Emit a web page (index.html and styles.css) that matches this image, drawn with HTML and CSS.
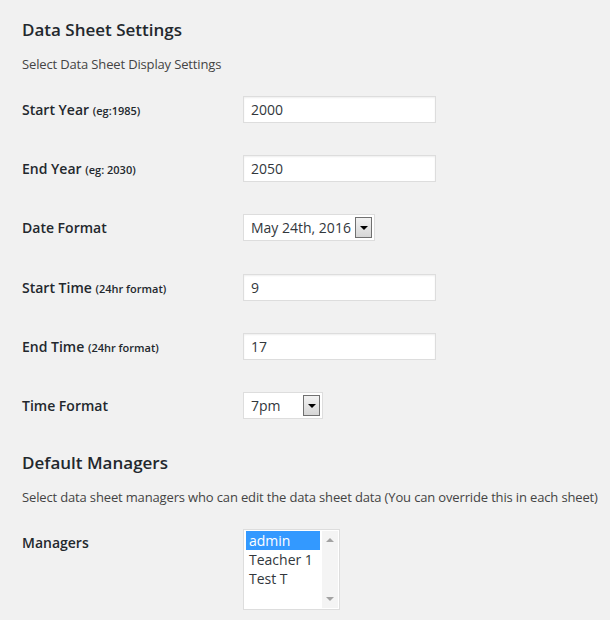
FILE: index.html
```html
<!DOCTYPE html>
<html>
<head>
<meta charset="utf-8">
<link rel="stylesheet" href="styles.css">
</head>
<body>
<div class="wrap">
  <h2 class="title">Data Sheet Settings</h2>
  <p class="desc">Select Data Sheet Display Settings</p>
  <div class="form">
    <div class="row">
      <div class="label">Start Year <small>(eg:1985)</small></div>
      <div class="field"><input class="text" type="text" value="2000"></div>
    </div>
    <div class="row">
      <div class="label">End Year <small>(eg: 2030)</small></div>
      <div class="field"><input class="text" type="text" value="2050"></div>
    </div>
    <div class="row row-select">
      <div class="label">Date Format</div>
      <div class="field">
        <div class="select select-date"><span class="value">May 24th, 2016</span><span class="arrow"><span class="tri"></span></span></div>
      </div>
    </div>
    <div class="row">
      <div class="label">Start Time <small>(24hr format)</small></div>
      <div class="field"><input class="text" type="text" value="9"></div>
    </div>
    <div class="row">
      <div class="label">End Time <small>(24hr format)</small></div>
      <div class="field"><input class="text" type="text" value="17"></div>
    </div>
    <div class="row">
      <div class="label">Time Format</div>
      <div class="field">
        <div class="select select-time"><span class="value">7pm</span><span class="arrow"><span class="tri"></span></span></div>
      </div>
    </div>
  </div>
  <h2 class="title title-2">Default Managers</h2>
  <p class="desc">Select data sheet managers who can edit the data sheet data (You can override this in each sheet)</p>
  <div class="form">
    <div class="row row-auto">
      <div class="label">Managers</div>
      <div class="field">
        <div class="listbox">
          <div class="options">
            <div class="option selected">admin</div>
            <div class="option">Teacher 1</div>
            <div class="option">Test T</div>
          </div>
          <div class="scrollbar">
            <span class="sb-up"></span>
            <span class="sb-down"></span>
          </div>
        </div>
      </div>
    </div>
  </div>
</div>
</body>
</html>
```

FILE: styles.css
```css
html, body {
  margin: 0;
  padding: 0;
  background: #f1f1f1;
}
body {
  font-family: "Open Sans", "Liberation Sans", sans-serif;
  color: #444;
  font-size: 13px;
}
.wrap {
  padding: 0 10px 0 22px;
}
.title {
  margin: 19px 0 0;
  font-size: 17px;
  line-height: 22px;
  font-weight: 600;
  color: #23282d;
}
.title-2 {
  margin-top: 16px;
}
.desc {
  margin: 13px 0 0;
  font-size: 13px;
  line-height: 20px;
  color: #444;
  letter-spacing: -0.15px;
  white-space: nowrap;
}
.form {
  margin-top: 7px;
}
.row {
  display: grid;
  grid-template-columns: 221px 1fr;
  align-items: start;
  height: 59px;
}
.row-select {
  height: 60px;
}
.row-auto {
  height: auto;
}
.label {
  padding-top: 19px;
  font-size: 14px;
  line-height: 20px;
  font-weight: 600;
  color: #23282d;
  white-space: nowrap;
}
.label small {
  font-size: 11px;
  font-weight: 600;
}
.field {
  padding-top: 15px;
}
.text {
  box-sizing: border-box;
  display: block;
  width: 193px;
  height: 27px;
  margin: 0;
  padding: 0 7px;
  border: 1px solid #ddd;
  background: #fff;
  box-shadow: inset 0 1px 2px rgba(0,0,0,0.07);
  font-family: "Open Sans", "Liberation Sans", sans-serif;
  font-size: 14px;
  color: #32373c;
  outline: none;
}
.select {
  box-sizing: border-box;
  display: flex;
  align-items: center;
  height: 27px;
  border: 1px solid #ddd;
  background: #fff;
  padding: 0 2px 0 7px;
  font-size: 14px;
  color: #32373c;
}
.select-date { width: 132px; }
.select-time { width: 80px; }
.select .value {
  flex: 1;
  white-space: nowrap;
  line-height: 19px;
}
.arrow {
  box-sizing: border-box;
  width: 17px;
  height: 21px;
  border: 1px solid #707070;
  background: linear-gradient(#f2f2f2, #d6d6d6);
  display: flex;
  align-items: center;
  justify-content: center;
}
.tri {
  width: 0;
  height: 0;
  border-left: 4px solid transparent;
  border-right: 4px solid transparent;
  border-top: 4px solid #000;
}
.listbox {
  box-sizing: border-box;
  width: 97px;
  height: 81px;
  border: 1px solid #ddd;
  background: #fff;
  display: flex;
  padding: 1px 1px 1px 2px;
}
.options {
  width: 74px;
  font-size: 14px;
  color: #32373c;
}
.option {
  height: 19px;
  line-height: 19px;
  padding-left: 3px;
  white-space: nowrap;
}
.option.selected {
  background: #3399ff;
  color: #fff;
}
.scrollbar {
  flex: 1;
  margin-left: 2px;
  background: #f4f4f4;
  display: flex;
  flex-direction: column;
  justify-content: space-between;
  align-items: center;
  padding: 7px 0 7px;
}
.sb-up {
  width: 0; height: 0;
  border-left: 4px solid transparent;
  border-right: 4px solid transparent;
  border-bottom: 4px solid #a3a3a3;
}
.sb-down {
  width: 0; height: 0;
  border-left: 4px solid transparent;
  border-right: 4px solid transparent;
  border-top: 4px solid #a3a3a3;
}
```
